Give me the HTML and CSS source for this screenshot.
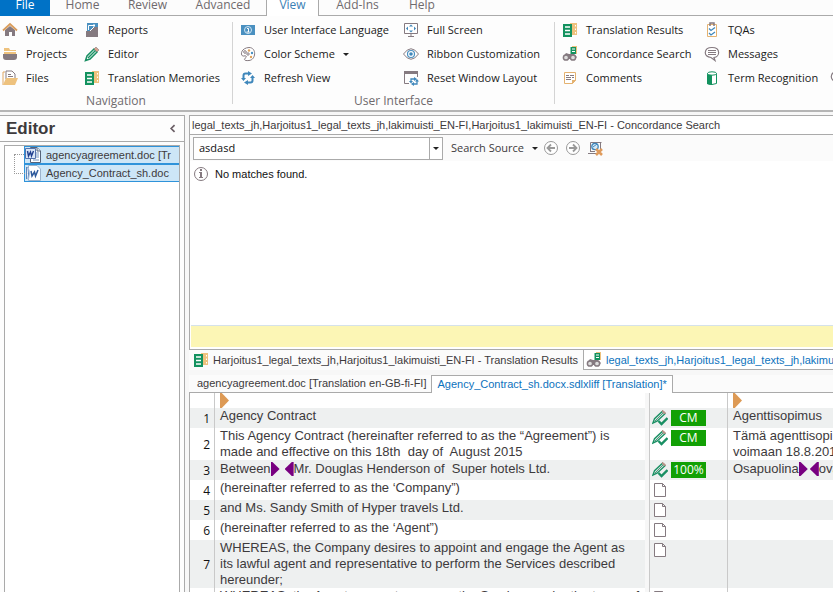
FILE: index.html
```html
<!DOCTYPE html>
<html lang="en">
<head>
<meta charset="utf-8">
<title>Editor</title>
<link rel="stylesheet" href="styles.css">
</head>
<body>
<svg class="defs" aria-hidden="true">
  <symbol id="i-home" viewBox="0 0 16 16"><path d="M3 8v6h4v-4h3v4h3V8L8 4z" fill="#857a80"/><path d="M1 8.500l7-6.500 7 6.500" fill="none" stroke="#d99c5b" stroke-width="1.800"/></symbol>
  <symbol id="i-projects" viewBox="0 0 16 16"><path d="M2 2h5l1 2h6v4H2z" fill="#eec27e"/><path d="M2 5.500h12" stroke="#fff"/><path d="M1 8h14v3q0 3-3 3H4q-3 0-3-3z" fill="#857a80"/></symbol>
  <symbol id="i-files" viewBox="0 0 16 16"><path d="M4 9V1h6l3 3v5z" fill="#fff" stroke="#857a80"/><path d="M6 4.500h3M6 6.500h5" stroke="#857a80"/><path d="M1 15V2h2" fill="none" stroke="#dfa765"/><path d="M4 8h12l-3 7H1z" fill="#eec27e"/></symbol>
  <symbol id="i-reports" viewBox="0 0 16 16"><path d="M3 1h11v8H3z" fill="#4a90c0"/><path d="M4.500 8V3.500H11" fill="none" stroke="#fff"/><path d="M2 15V9h4l4-4h4v10z" fill="#857a80"/><path d="M6 9l4-4V2" fill="none" stroke="#fff"/></symbol>
  <symbol id="i-pencil" viewBox="0 0 16 16"><path d="M1.500 14.500L3 10l7-7 3 3-7 7z" fill="#fff" stroke="#198f63" stroke-width="1.500"/><path d="M4 12l7-7" stroke="#198f63" stroke-width="1.500"/><path d="M10 3l2-2 3 3-2 2z" fill="#d8a48e" stroke="#857a80" stroke-width=".6"/></symbol>
  <symbol id="i-memory" viewBox="0 0 16 16"><path d="M8 1h7v12H9z" fill="#eec27e"/><path d="M13.500 3v10" stroke="#fff" stroke-dasharray="1.500 2"/><path d="M1 2h9v13H1z" fill="#13925f"/><path d="M3 5h5M3 8.500h5M3 12h5" stroke="#fff" stroke-width="1.500"/></symbol>
  <symbol id="i-flag" viewBox="0 0 16 16"><path d="M1 3h14v10H1z" fill="#4a90c0"/><circle cx="8" cy="8" r="3.500" fill="none" stroke="#cfe5f3"/><path d="M7 6.500h1.500v3.500M6.500 10h3" fill="none" stroke="#fff"/></symbol>
  <symbol id="i-palette" viewBox="0 0 16 16"><path d="M9 1.500c8 0 7 12.500 0 13-5 .5-5.500-1-3-3 1-1.500-.5-2-2-1.500C0 11 0 2 9 1.500z" fill="#fff" stroke="#857a80"/><circle cx="5" cy="6" r="1.300" fill="none" stroke="#857a80"/><circle cx="9" cy="4.500" r="1.200" fill="#e0a25b"/><circle cx="12" cy="7" r="1.200" fill="#4a90c0"/><circle cx="11" cy="11" r="1.200" fill="#e0a25b"/><circle cx="8" cy="8" r="1.200" fill="none" stroke="#857a80"/></symbol>
  <symbol id="i-refresh" viewBox="0 0 16 16"><path d="M3.500 9V5.500q0-2 2-2H9M12.500 7v3.500q0 2-2 2H7" fill="none" stroke="#3f87bb" stroke-width="2"/><path d="M8 1l4 2.500L8 6zM8 10l-4 2.500L8 15zM1 8h5l-2.500 3zM10 8h5l-2.500-3z" fill="#3f87bb"/></symbol>
  <symbol id="i-full" viewBox="0 0 16 16"><path d="M1.500 1.500h13v10h-13z" fill="#fff" stroke="#857a80"/><path d="M8 12v3M5 14.500h6" stroke="#857a80"/><path d="M8 2.500l2 2H6zM8 10.500l2-2H6zM3 6.500l2-2v4zM13 6.500l-2-2v4z" fill="#3f87bb"/></symbol>
  <symbol id="i-eye" viewBox="0 0 16 16"><path d="M.5 8Q8-2.500 15.500 8 8 18.500.5 8z" fill="#fff" stroke="#857a80"/><circle cx="8" cy="8" r="3.500" fill="none" stroke="#4a90c0" stroke-width="1.200"/><circle cx="8" cy="8" r="1.800" fill="#3f87bb"/></symbol>
  <symbol id="i-reset" viewBox="0 0 16 16"><path d="M6 13.500H1.500v-12h13V7" fill="none" stroke="#857a80"/><path d="M1 1h14v3H1z" fill="#857a80"/><path d="M8 12V9h4M14 10v4h-4" fill="none" stroke="#3f87bb" stroke-width="1.300"/><path d="M11 7l3 2-3 2zM11 12l-3 2 3 2zM6 11h4l-2 2.500zM12 11.500h4l-2-2.500z" fill="#3f87bb"/></symbol>
  <symbol id="i-search" viewBox="0 0 16 16"><path d="M10 0h5v8h-5z" fill="#eec27e"/><path d="M8.500 1H14v7H8.500z" fill="#13925f"/><path d="M10 3h3M10 5.500h3" stroke="#fff"/><path d="M1 11l3-4 3 1h2l3 0 3 3-2 2H2z" fill="#857a80"/><circle cx="4" cy="11.500" r="2.600" fill="#ddd" stroke="#857a80" stroke-width="1.500"/><circle cx="11" cy="11.500" r="2.600" fill="#ddd" stroke="#857a80" stroke-width="1.500"/></symbol>
  <symbol id="i-comment" viewBox="0 0 16 16"><path d="M2.500 2.500h11v8l-3 3h-8z" fill="#fff" stroke="#e4b270"/><path d="M10 14v-4h4z" fill="#e4b270"/><path d="M4 5.500h3m1 0h4M4 7.500h5m1 0h2M4 9.500h5" stroke="#857a80"/></symbol>
  <symbol id="i-tqa" viewBox="0 0 16 16"><path d="M3.500 2.500h9v12h-9z" fill="#fff" stroke="#e4b270"/><path d="M6 4V1h4v3" fill="none" stroke="#857a80" stroke-width="1.500"/><path d="M5 6.500l2 2 4-3M5 11l2 2 4-3" fill="none" stroke="#3f87bb" stroke-width="1.300"/></symbol>
  <symbol id="i-message" viewBox="0 0 16 16"><path d="M8 1.500c9 0 8 9.500 2 10l1 3-4-3C-1 11-.5 1.500 8 1.500z" fill="#fff" stroke="#857a80" stroke-width="1.200"/><path d="M4 4.500h8M4 6.500h8M4 8.500h8" stroke="#857a80"/></symbol>
  <symbol id="i-term" viewBox="0 0 16 16"><path d="M3.500 3.500v10q4.500 2 9 0v-10z" fill="#fff" stroke="#13925f"/><path d="M3 3h5v12q-3 0-5-1z" fill="#13925f"/><ellipse cx="8" cy="3.500" rx="4.500" ry="1.700" fill="#fff" stroke="#13925f"/></symbol>
  <symbol id="i-word" viewBox="0 0 16 16"><path d="M5.500.5H12L15.500 4v11.500h-10z" fill="#fff" stroke="#56647a"/><path d="M12 .5v3.500h3.500" fill="#dce6f3" stroke="#56647a"/><path d="M11 6h3M11 8h3M11 10h3M8 13h6" stroke="#7593bd"/><path d="M.5 1.500h10v10H.5z" fill="#dbe7f7" stroke="#5573ad"/><path d="M2.500 4l1 5 2-4 1 4 2-5" fill="none" stroke="#203f8f" stroke-width="1.400"/></symbol>
  <symbol id="i-word2" viewBox="0 0 16 16"><path d="M3.500.5H12L15.500 4v11.500h-12z" fill="#fff" stroke="#9db4cd"/><path d="M1 2q5-1 3 12H1z" fill="#5e86bb"/><path d="M3 3q-1 6 0 11" stroke="#fff" fill="none"/><path d="M6 6l1 5 2.500-4 1 4L13 5" fill="none" stroke="#2e5a9c" stroke-width="1.500"/></symbol>
  <symbol id="i-info" viewBox="0 0 16 16"><circle cx="8" cy="8" r="6.500" fill="#fff" stroke="#857a80"/><path d="M7 3h2v2H7zM6 6h3v5h1v1H6v-1h1V7H6z" fill="#857a80"/></symbol>
  <symbol id="i-prev" viewBox="0 0 16 16"><circle cx="8" cy="8" r="6.500" fill="#fff" stroke="#999"/><path d="M12 8H5M8 4.500L4.500 8 8 11.500" fill="none" stroke="#999" stroke-width="1.800"/></symbol>
  <symbol id="i-next" viewBox="0 0 16 16"><circle cx="8" cy="8" r="6.500" fill="#fff" stroke="#999"/><path d="M4 8h7M8 4.500L11.500 8 8 11.500" fill="none" stroke="#999" stroke-width="1.800"/></symbol>
  <symbol id="i-clear" viewBox="0 0 16 16"><path d="M3.500 11V2.500h11M13.500 3v6M1 13.500h8M3 11.500h5" fill="none" stroke="#857a80"/><circle cx="8" cy="6.500" r="3.200" fill="#d7eaf6" stroke="#3f87bb" stroke-width="1.300"/><path d="M6 7l4-3" stroke="#3f87bb"/><path d="M9 9l6 6M15 9l-6 6" stroke="#df9b5c" stroke-width="2.500"/></symbol>
  <symbol id="i-confirm" viewBox="0 0 16 16"><path d="M.8 13.200l1.700-4.500 8-7.500 2.500 2.500-8 7.500z" fill="#cfe9df" stroke="#198f63" stroke-width="1.300"/><path d="M3 11l8-8" stroke="#5f8f80"/><path d="M10 1l1-.5 2.500 2.500-1 1z" fill="#d8a48e" stroke="#b18b85"/><path d="M6.500 11l3 3 6-6" fill="none" stroke="#198f63" stroke-width="2.400"/></symbol>
  <symbol id="i-page" viewBox="0 0 16 16"><path d="M2.500 1.500h8l3 3v10h-11zM10.500 1.500v3h3" fill="#fff" stroke="#857a80"/></symbol>
</svg>

<nav class="tabs">
  <a class="tab tab-file" href="#">File</a>
  <a class="tab tab-home" href="#">Home</a>
  <a class="tab tab-review" href="#">Review</a>
  <a class="tab tab-advanced" href="#">Advanced</a>
  <a class="tab tab-view" href="#">View</a>
  <a class="tab tab-addins" href="#">Add-Ins</a>
  <a class="tab tab-help" href="#">Help</a>
</nav>

<section class="ribbon">
  <div class="group group-nav">
    <div class="cmds">
      <button><svg><use href="#i-home"/></svg>Welcome</button>
      <button><svg><use href="#i-projects"/></svg>Projects</button>
      <button><svg><use href="#i-files"/></svg>Files</button>
      <button><svg><use href="#i-reports"/></svg>Reports</button>
      <button><svg><use href="#i-pencil"/></svg>Editor</button>
      <button><svg><use href="#i-memory"/></svg>Translation Memories</button>
    </div>
    <div class="group-label">Navigation</div>
  </div>
  <div class="group group-ui">
    <div class="cmds">
      <button><svg><use href="#i-flag"/></svg>User Interface Language</button>
      <button><svg><use href="#i-palette"/></svg>Color Scheme<i class="caret"></i></button>
      <button><svg><use href="#i-refresh"/></svg>Refresh View</button>
      <button><svg><use href="#i-full"/></svg>Full Screen</button>
      <button><svg><use href="#i-eye"/></svg>Ribbon Customization</button>
      <button><svg><use href="#i-reset"/></svg>Reset Window Layout</button>
    </div>
    <div class="group-label">User Interface</div>
  </div>
  <div class="group group-info">
    <div class="cmds">
      <button><svg><use href="#i-memory"/></svg>Translation Results</button>
      <button><svg><use href="#i-search"/></svg>Concordance Search</button>
      <button><svg><use href="#i-comment"/></svg>Comments</button>
      <button><svg><use href="#i-tqa"/></svg>TQAs</button>
      <button><svg><use href="#i-message"/></svg>Messages</button>
      <button><svg><use href="#i-term"/></svg>Term Recognition</button>
    </div>
  </div>
  <button class="more" aria-label="More"><svg><use href="#i-message"/></svg></button>
</section>

<main class="work">
  <aside class="side">
    <header class="side-head"><h1>Editor</h1><button class="collapse" aria-label="Collapse"><svg viewBox="0 0 8 8"><path d="M5.500 1.500L3 4l2.500 2.500" fill="none" stroke="#6b5f66" stroke-width="1.200"/></svg></button></header>
    <div class="side-body">
      <ul class="tree">
        <li><a href="#"><svg><use href="#i-word"/></svg>agencyagreement.doc [Tr</a></li>
        <li><a href="#"><svg><use href="#i-word2"/></svg>Agency_Contract_sh.doc</a></li>
      </ul>
    </div>
  </aside>

  <div class="main">
    <section class="search">
      <h2>legal_texts_jh,Harjoitus1_legal_texts_jh,lakimuisti_EN-FI,Harjoitus1_lakimuisti_EN-FI - Concordance Search</h2>
      <div class="toolbar">
        <div class="combo"><input type="text" value="asdasd" aria-label="Search text"><button aria-label="Search history"><i class="caret"></i></button></div>
        <button class="source">Search Source<i class="caret"></i></button>
        <button class="tool" aria-label="Previous"><svg><use href="#i-prev"/></svg></button>
        <button class="tool" aria-label="Next"><svg><use href="#i-next"/></svg></button>
        <button class="tool" aria-label="Clear results"><svg><use href="#i-clear"/></svg></button>
      </div>
      <p class="result"><svg><use href="#i-info"/></svg>No matches found.</p>
      <div class="note"></div>
    </section>

    <nav class="panes">
      <a href="#"><svg><use href="#i-memory"/></svg>Harjoitus1_legal_texts_jh,Harjoitus1_lakimuisti_EN-FI - Translation Results</a>
      <a class="on" href="#"><svg><use href="#i-search"/></svg>legal_texts_jh,Harjoitus1_legal_texts_jh,lakimuisti_EN-FI</a>
    </nav>
    <nav class="docs">
      <a href="#">agencyagreement.doc [Translation en-GB-fi-FI]</a>
      <a class="on" href="#">Agency_Contract_sh.docx.sdlxliff [Translation]*</a>
      <span class="fill"></span>
    </nav>

    <div class="grid">
      <table>
        <colgroup><col class="c-num"><col class="c-src"><col class="c-gap"><col class="c-stat"><col class="c-tgt"></colgroup>
        <thead><tr><th></th><th><i class="mark"></i></th><th class="gap"></th><th></th><th><i class="mark"></i></th></tr></thead>
        <tbody>
          <tr><td>1</td><td>Agency Contract</td><td class="gap"></td><td><div class="stat"><svg><use href="#i-confirm"/></svg><b>CM</b></div></td><td>Agenttisopimus</td></tr>
          <tr><td>2</td><td>This Agency Contract (hereinafter referred to as the “Agreement”) is<br>made and effective on this 18th&nbsp; day of&nbsp; August 2015</td><td class="gap"></td><td><div class="stat"><svg><use href="#i-confirm"/></svg><b>CM</b></div></td><td>Tämä agenttisopimus<br>voimaan 18.8.2015</td></tr>
          <tr><td>3</td><td><span class="line">Between<i class="tag open"></i><i class="tag close spaced"></i>Mr. Douglas Henderson of&nbsp; Super hotels Ltd.</span></td><td class="gap"></td><td><div class="stat"><svg><use href="#i-confirm"/></svg><b>100%</b></div></td><td><span class="line">Osapuolina<i class="tag open"></i><i class="tag close"></i>ovat</span></td></tr>
          <tr><td>4</td><td>(hereinafter referred to as the ‘Company”)</td><td class="gap"></td><td><div class="stat"><svg><use href="#i-page"/></svg></div></td><td></td></tr>
          <tr><td>5</td><td>and Ms. Sandy Smith of Hyper travels Ltd.</td><td class="gap"></td><td><div class="stat"><svg><use href="#i-page"/></svg></div></td><td></td></tr>
          <tr><td>6</td><td>(hereinafter referred to as the ‘Agent”)</td><td class="gap"></td><td><div class="stat"><svg><use href="#i-page"/></svg></div></td><td></td></tr>
          <tr><td>7</td><td>WHEREAS, the Company desires to appoint and engage the Agent as<br>its lawful agent and representative to perform the Services described<br>hereunder;</td><td class="gap"></td><td><div class="stat"><svg><use href="#i-page"/></svg></div></td><td></td></tr>
          <tr><td></td><td>WHEREAS, the Agent agrees to assume the Services under the terms of</td><td class="gap"></td><td><div class="stat"><svg><use href="#i-page"/></svg></div></td><td></td></tr>
        </tbody>
      </table>
    </div>
  </div>
</main>
</body>
</html>
```
FILE: styles.css
```css
* { box-sizing: border-box; }
html, body { height: 100%; }
body {
  margin: 0;
  display: flex;
  flex-direction: column;
  overflow: hidden;
  background: #f7f7f7;
  color: #1a1a1a;
  font: 12px/16px "Open Sans", "Noto Sans", sans-serif;
  white-space: nowrap;
}
button { border: 0; padding: 0; background: none; color: inherit; font: inherit; }
a { color: inherit; text-decoration: none; }
svg { width: 16px; height: 16px; flex: none; }
.defs { position: absolute; width: 0; height: 0; }

.tabs { display: flex; flex: none; height: 16px; overflow: hidden; background: #fcfcfc; color: #6f6a6d; line-height: 16px; }
.tab { height: 16px; border-bottom: 1px solid #aaa; display: flex; justify-content: center; align-items: flex-end; padding-bottom: 2px; }
.tab-file { width: 50px; background: #0072c6; border-color: #0072c6; color: #fff; }
.tab-home { width: 65px; }
.tab-review { width: 65px; }
.tab-advanced { width: 86px; }
.tab-view { width: 53px; background: #fff; color: #3b7fb5; border: 1px solid #aaa; border-width: 0 1px; padding-bottom: 3px; }
.tab-addins { width: 77px; }
.tab-help { flex: 1; justify-content: flex-start; padding-left: 13px; }

.ribbon { display: flex; flex: none; height: 96px; padding: 6px 0; overflow: hidden; background: #fdfdfd; border-bottom: 2px solid #b5b5b5; font-size: 11px; }
.group { flex: none; height: 82px; border-right: 1px solid #d4d4d4; }
.group-nav { width: 233px; }
.group-ui { width: 322px; }
.group-info { width: 275px; border: 0; }
.cmds { display: grid; grid-template-rows: repeat(3, 24px); grid-auto-flow: column; padding-left: 2px; }
.group-nav .cmds { grid-template-columns: 82px 1fr; }
.group-ui .cmds { grid-template-columns: 163px 1fr; padding-left: 7px; }
.group-info .cmds { grid-template-columns: 142px 1fr; padding-left: 7px; }
.cmds button { display: flex; align-items: center; gap: 8px; height: 16px; }
.group-label { text-align: center; color: #6f6a6d; font-size: 12px; line-height: 14px; }
.more { display: flex; align-self: flex-end; margin-bottom: 18px; }
.caret { border: 3px solid transparent; border-top-color: #222; border-bottom: 0; display: inline-block; }

.work { flex: 1; min-height: 0; display: flex; gap: 4px; padding-top: 3px; }
.side { width: 185px; flex: none; display: flex; flex-direction: column; border: 1px solid #aaa; border-width: 1px 1px 0 0; }
.side-head { display: flex; justify-content: space-between; align-items: center; height: 26px; padding: 0 6px; background: #fdfdfd; border-bottom: 1px solid #aaa; }
h1 { margin: 0; font: bold 17px/24px "Liberation Sans", sans-serif; color: #3d3a3c; }
.collapse { display: flex; }
.collapse svg { width: 11px; height: 11px; }
.side-body { flex: 1; display: flex; padding: 3px 4px 0; background: #fdfdfd; }
.tree { flex: 1; min-width: 0; margin: 0; padding: 0 0 0 19px; list-style: none; background: #fff; border: 1px solid #aaa; border-bottom: 0; overflow: hidden; color: #3d3a3c; font: 11px/16px "Liberation Sans", sans-serif; }
.tree li { position: relative; }
.tree li::before { content: ""; position: absolute; left: -10px; width: 10px; border-top: 1px dotted #999; top: 8px; }
.tree li + li::before { border-top: 0; border-bottom: 1px dotted #999; border-left: 1px dotted #999; height: 18px; top: -9px; }
.tree a { display: flex; align-items: center; gap: 5px; height: 18px; background: #cde6f7; border: 1px solid #2f93da; border-right: 0; overflow: hidden; }

.main { flex: 1; min-width: 0; display: flex; flex-direction: column; color: #3d3a3c; font: 11px/16px "Liberation Sans", sans-serif; }
.search { flex: none; height: 235px; display: flex; flex-direction: column; background: #fff; border: 1px solid #aaa; border-right: 0; }
h2 { margin: 0; padding-left: 2px; font: inherit; line-height: 18px; border-bottom: 1px solid #aaa; flex: none; }
.toolbar { display: flex; align-items: center; height: 26px; padding-left: 3px; background: #fbfbfb; font-family: "Open Sans", sans-serif; }
.combo { display: flex; width: 250px; height: 23px; border: 1px solid #aaa; background: #fff; }
.combo input { flex: 1; min-width: 0; border: 0; padding: 0 5px; font: inherit; color: #111; outline: 0; }
.combo button { width: 13px; border-left: 1px solid #aaa; display: flex; align-items: center; justify-content: center; }
.source { display: flex; align-items: center; gap: 8px; margin: 0 5px 0 8px; }
.tool { display: flex; margin-right: 6px; }
.result { display: flex; align-items: center; gap: 6px; margin: 5px 0 0 3px; color: #111; }
.note { height: 22px; margin: auto 0 2px 1px; background: #fcf6b5; border-top: 1px solid #d5e2ea; }

.panes { flex: none; display: flex; height: 20px; background: #fbfbfb; overflow: hidden; }
.panes a { display: flex; align-items: center; gap: 4px; padding: 0 5px 0 4px; flex: none; border: 1px solid #aaa; border-width: 0 1px 0 0; }
.panes .on { border-width: 0 0 1px; padding-left: 2px; color: #0c72bd; background: #fff; flex: 1; }
.docs { flex: none; display: flex; height: 18px; margin-top: 5px; background: #fbfbfb; }
.docs a { padding: 0 5px 0 8px; border-bottom: 1px solid #aaa; }
.docs .on { padding: 0 5px; color: #0c72bd; background: #fff; border: 1px solid #aaa; border-bottom: 0; }
.fill { flex: 1; border-bottom: 1px solid #aaa; }

.grid { flex: 1; min-height: 0; overflow: hidden; background: #fff; border-left: 1px solid #aaa; }
table { width: 100%; table-layout: fixed; border-collapse: separate; border-spacing: 0; font: 13px/16px "Liberation Sans", sans-serif; }
.c-num { width: 25px; }
.c-gap { width: 4px; }
.c-stat { width: 79px; }
.c-tgt { width: 105px; }
th { height: 15px; padding: 0 5px; text-align: left; vertical-align: top; }
td { height: 20px; padding: 0 0 0 5px; vertical-align: top; overflow: hidden; }
td:first-child { padding: 2px 4px 0 0; text-align: right; vertical-align: middle; font: 12px/16px "Open Sans", sans-serif; color: #111; }
tr > :first-child { border-right: 1px solid #c9c9c9; }
tr > :nth-child(4) { border: 1px solid #c9c9c9; border-width: 0 1px; padding: 0 0 0 2px; }
tbody tr:nth-child(odd) { background: #eef0f0; }
tr > .gap { background: #f7f7f7; padding: 0; }
.mark { display: block; width: 9px; height: 15px; background: #dd9a55; clip-path: polygon(0 0, 20% 0, 100% 50%, 20% 100%, 0 100%); }
.stat { display: flex; align-items: center; gap: 3px; height: 20px; }
.stat b { width: 35px; height: 16px; background: #12a005; color: #fff; font: 12px/16px "Open Sans", sans-serif; text-align: center; }
.line { display: flex; align-items: center; height: 18px; }
.tag { width: 9px; height: 14px; background: #780080; flex: none; }
.open { clip-path: polygon(0 0, 20% 0, 100% 50%, 20% 100%, 0 100%); }
.close { clip-path: polygon(100% 0, 80% 0, 0 50%, 80% 100%, 100% 100%); margin-left: 2px; }
.spaced { margin-left: 5px; }
```
